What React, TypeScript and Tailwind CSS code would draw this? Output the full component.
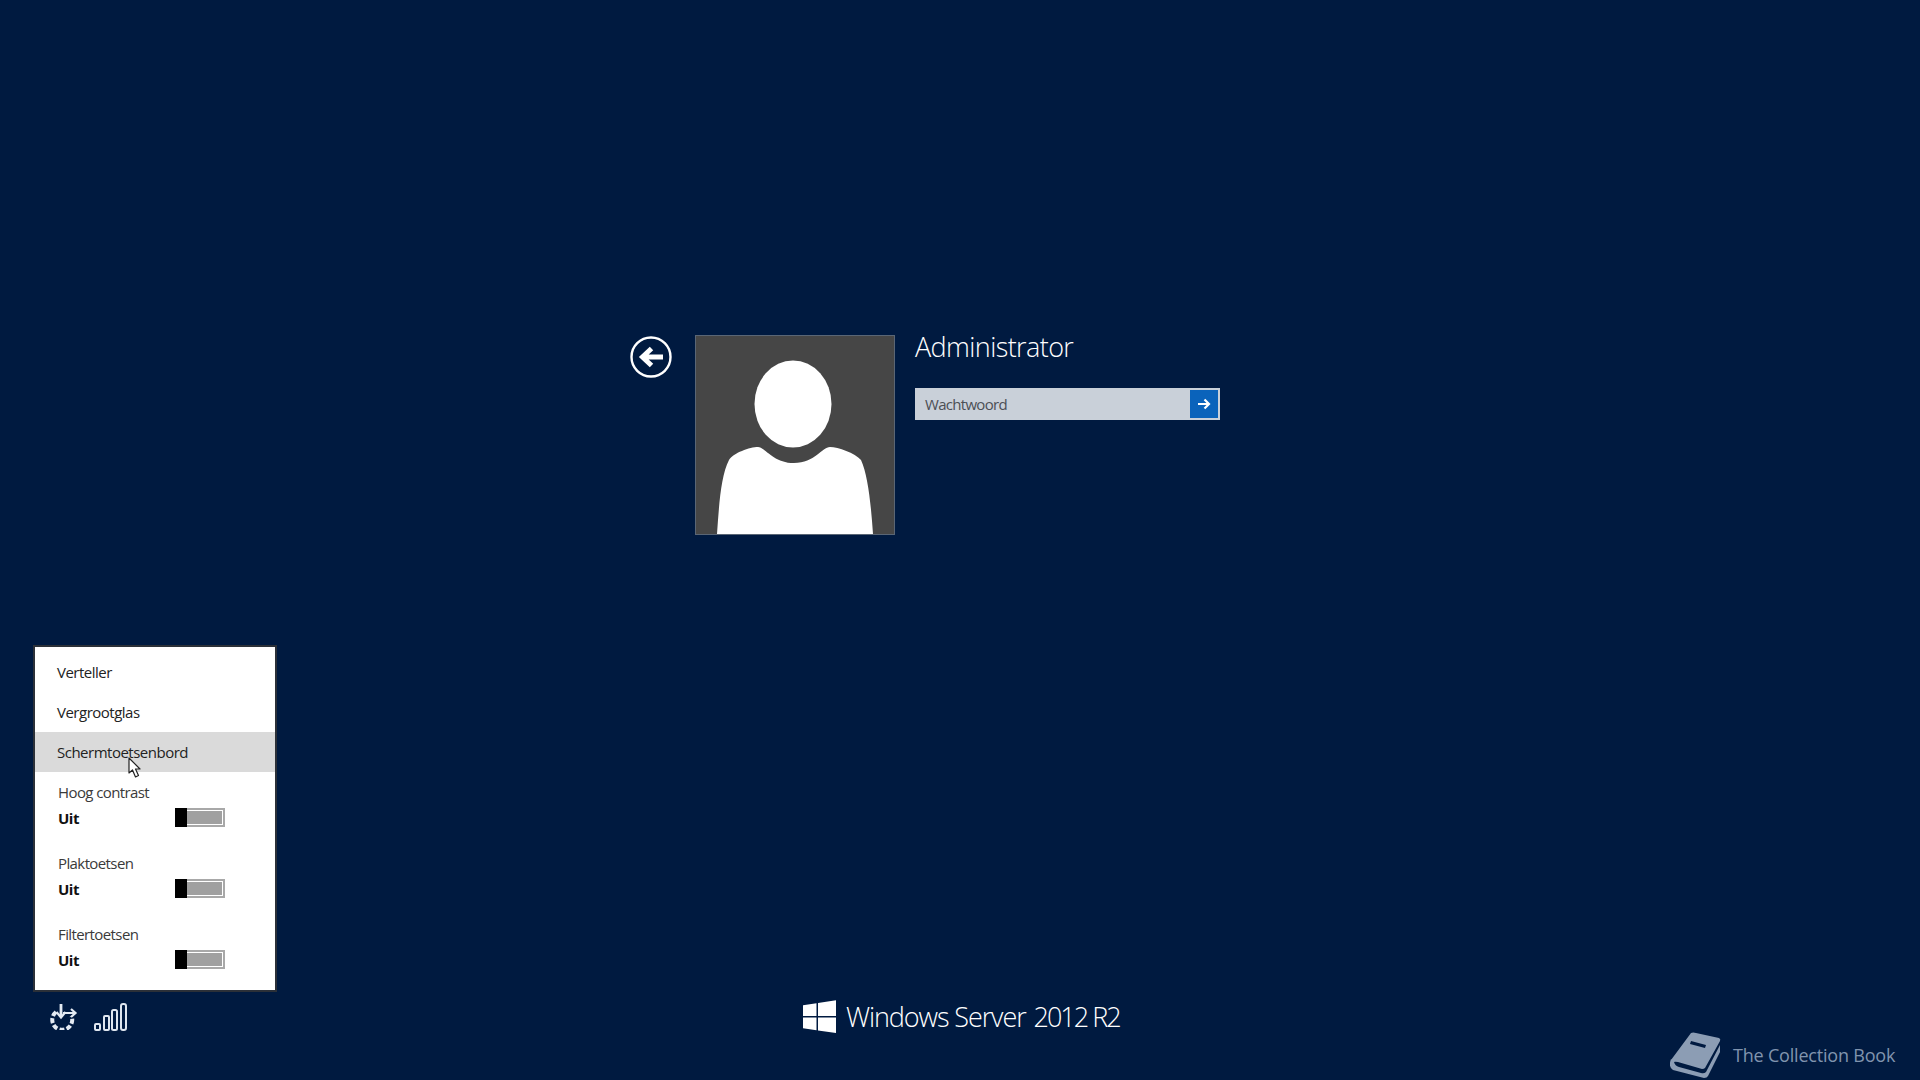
const FONT = "font-['Open_Sans','Noto_Sans',sans-serif]"

const ToggleRow = ({ label }: { label: string }) => (
  <div className="h-[71px] pl-[23px] pt-[10px]">
    <div className="text-[15px] leading-5 tracking-[-0.6px] text-[#3a3a3a]">{label}</div>
    <div className="mt-[5px] flex h-[20px] items-center">
      <span className="mt-[2px] w-[117px] text-[15px] font-bold leading-5 tracking-[-0.5px] text-[#111]">Uit</span>
      <div className="flex h-[19px] w-[50px] border-2 border-[#a8a8a8] bg-white">
        <div className="-my-[2px] -ml-[2px] w-[12px] shrink-0 bg-black" />
        <div className="m-[1px] ml-0 flex-1 bg-[#a0a0a0]" />
      </div>
    </div>
  </div>
)

const MenuRow = ({ label, active }: { label: string; active?: boolean }) => (
  <div className={`relative flex h-10 items-center pl-[22px] text-[15px] tracking-[-0.5px] text-[#222] ${active ? "bg-[#dadada]" : ""}`}>
    {label}
    {active && (
      <svg className="absolute left-[93px] top-[25px]" width="14" height="22" viewBox="0 0 14 22">
        <path d="M1 1 L1 16 L4.5 13 L7.5 20 L10.5 18.5 L7.5 12 L12 12 Z" fill="#fff" stroke="#222" strokeWidth="1.2" strokeLinejoin="round" />
      </svg>
    )}
  </div>
)

const Avatar = () => (
  <svg width="200" height="200" viewBox="0 0 200 200" className="shrink-0">
    <rect x="0.5" y="0.5" width="199" height="199" fill="#464646" stroke="#5a6675" />
    <ellipse cx="98" cy="69" rx="38.5" ry="43.5" fill="#fff" />
    <path
      d="M22 199 C24 170 26 140 34 125 C38 118 55 112 63 112 C70 112 78 128 99 128 C120 128 127 112 135 112 C143 112 160 118 166 125 C173 140 176 170 178 199 Z"
      fill="#fff"
    />
  </svg>
)

const BackIcon = () => (
  <svg width="42" height="42" viewBox="0 0 42 42">
    <circle cx="21" cy="21" r="19.5" fill="none" stroke="#fff" strokeWidth="2.4" />
    <path d="M33 21 H13 M21.5 12.5 L12.5 21 L21.5 29.5" fill="none" stroke="#fff" strokeWidth="5" />
  </svg>
)

const EaseIcon = () => (
  <svg width="28" height="26" viewBox="0 0 28 26" fill="none" stroke="#e4eaf2">
    <path d="M6 8 A10 10 0 1 0 21.5 12" strokeWidth="4" strokeDasharray="5 2.2" />
    <path d="M11 0 V12" strokeWidth="2.8" />
    <path d="M6.5 8 L11 13.5 L15.5 8" strokeWidth="2.2" />
    <path d="M13 9 H25 M21 5 L25.5 9 L21 13" strokeWidth="2.2" />
  </svg>
)

const SignalIcon = () => (
  <svg width="33" height="28" viewBox="0 0 33 28" fill="none" stroke="#dfe6ef" strokeWidth="2">
    <rect x="1" y="21" width="5" height="6" rx="1" />
    <rect x="10" y="13" width="5" height="14" rx="1" />
    <rect x="18" y="7" width="5" height="20" rx="1.5" />
    <rect x="27" y="1" width="5" height="26" rx="2" />
  </svg>
)

const WinLogo = () => (
  <svg width="34" height="34" viewBox="0 0 34 34" fill="#fff">
    <path d="M0 5.2 L13.5 3.2 V16 H0 Z" />
    <path d="M15 3 L33 0.3 V16 H15 Z" />
    <path d="M0 17.5 H13.5 V30.3 L0 28.3 Z" />
    <path d="M15 17.5 H33 V33 L15 30.5 Z" />
  </svg>
)

const BookIcon = () => (
  <svg width="51" height="47" viewBox="0 0 51 47">
    <path d="M21 1 Q23 0 26 1 L49 6 Q51 7 50 9 L35 36 Q34 37 32 37 L8 30 Q4 29 2 31 L1 28 Z" fill="#8c9db4" />
    <path d="M21 9 L36 13 L35 16 L20 12 Z" fill="#001a40" />
    <path d="M1 27 Q-2 35 3 38 L34 46 Q37 46 38 44 L50 20 L50 13 L36 40 Q34 42 31 41 L9 35 Q5 34 4 30 Z" fill="#8c9db4" />
  </svg>
)

export default function App() {
  return (
    <div className={`relative flex h-[1080px] w-[1920px] flex-col overflow-hidden bg-[#001a40] ${FONT}`}>
      {/* gebruiker */}
      <div className="ml-[630px] mt-[335px] flex h-[200px] items-start">
        <div className="mt-[1px] w-[65px]">
          <BackIcon />
        </div>
        <Avatar />
        <div className="ml-[20px]">
          <div className="mt-[-7px] text-[27px] font-light leading-[38px] tracking-[-0.6px] text-white">Administrator</div>
          <div className="mt-[22px] flex h-[32px] w-[305px] items-center border-2 border-[#c9d0d9] bg-[#c9d0d9]">
            <span className="flex-1 pl-[8px] text-[15px] tracking-[-0.7px] text-[#4c4f55]">Wachtwoord</span>
            <div className="flex h-[28px] w-[28px] items-center justify-center bg-[#0a63bb]">
              <svg width="14" height="12" viewBox="0 0 14 12" fill="none" stroke="#fff" strokeWidth="2.2">
                <path d="M1 6 H12 M7.5 1.5 L12 6 L7.5 10.5" />
              </svg>
            </div>
          </div>
        </div>
      </div>

      {/* onderbalk */}
      <div className="mt-[462px] flex h-[40px] items-center">
        <div className="ml-[50px] flex w-[753px] items-center gap-[16px]">
          <EaseIcon />
          <SignalIcon />
        </div>
        <WinLogo />
        <div className="ml-[9px] flex items-baseline text-[27px] font-light leading-[34px] tracking-[-1.1px] text-white">
          <span>Windows Server</span>
          <span className="ml-[8px] tracking-[-2px]">2012 R2</span>
        </div>
      </div>

      {/* toegankelijkheid menu */}
      <div className="absolute left-[33px] top-[645px] h-[347px] w-[244px] border-2 border-[#2b3038] bg-white pt-[5px]">
        <MenuRow label="Verteller" />
        <MenuRow label="Vergrootglas" />
        <MenuRow label="Schermtoetsenbord" active />
        <ToggleRow label="Hoog contrast" />
        <ToggleRow label="Plaktoetsen" />
        <ToggleRow label="Filtertoetsen" />
      </div>

      {/* watermerk */}
      <div className="absolute left-[1670px] top-[1032px] flex items-center">
        <BookIcon />
        <span className="ml-[12px] mt-[-1px] text-[18px] tracking-[-0.2px] text-[#8094ae]">The Collection Book</span>
      </div>
    </div>
  )
}
